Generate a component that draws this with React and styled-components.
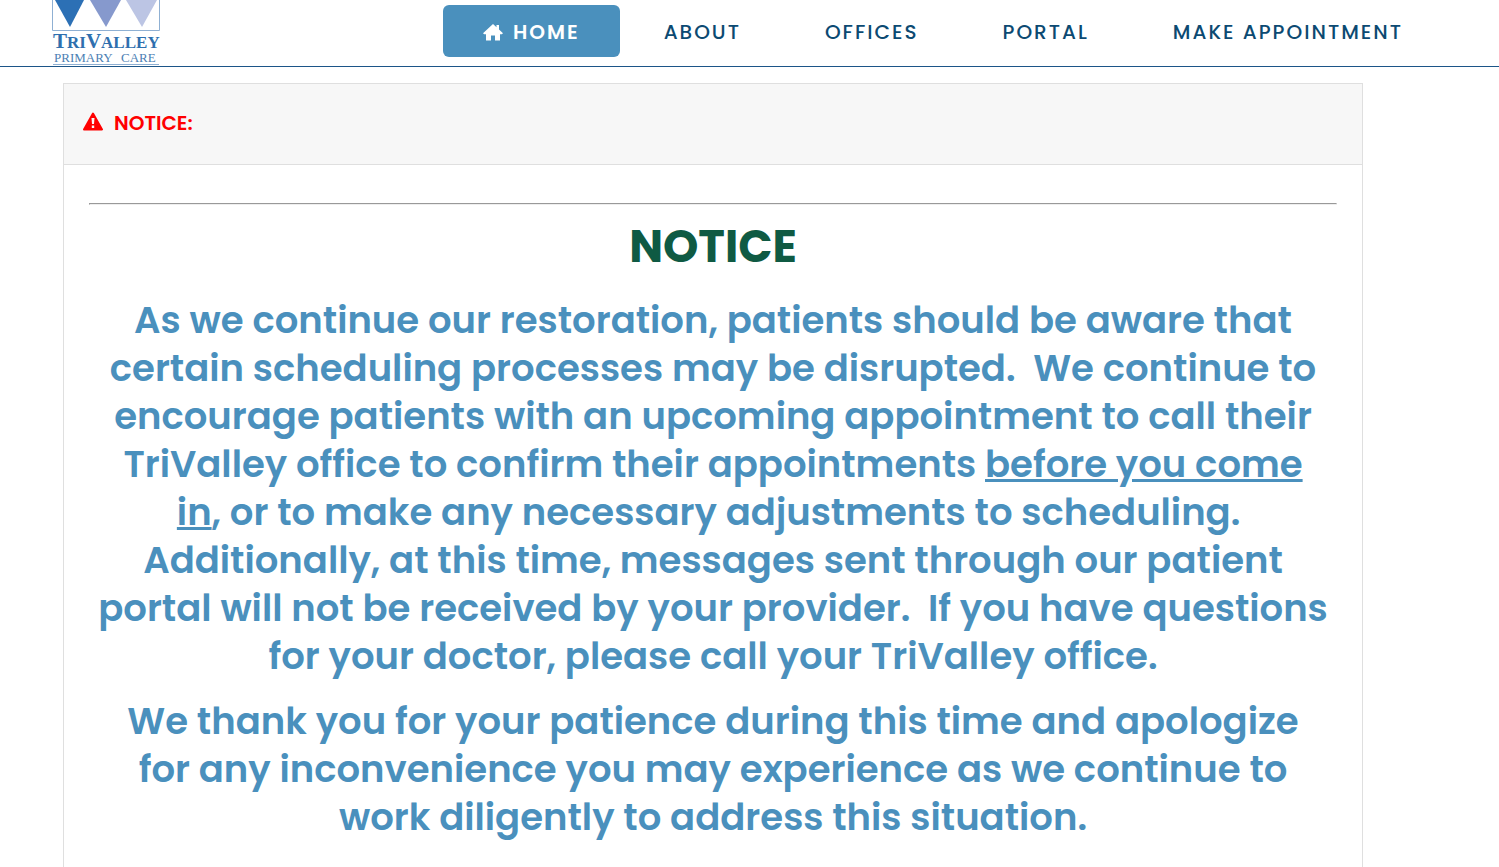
import React from 'react';
import styled, { createGlobalStyle } from 'styled-components';

const GlobalStyle = createGlobalStyle`
  * {
    box-sizing: border-box;
  }
  body {
    margin: 0;
    background: #fff;
    font-family: Poppins, Inter, "Open Sans", sans-serif;
  }
`;

const Header = styled.header`
  display: flex;
  justify-content: space-between;
  align-items: flex-start;
  height: 67px;
  padding: 0 56px 0 51px;
  border-bottom: 1px solid #1c5588;
`;

const LogoLink = styled.a`
  display: block;
  svg {
    display: block;
  }
`;

const Nav = styled.nav`
  display: flex;
  gap: 4px;
  padding-top: 5px;
`;

const NavLink = styled.a`
  display: flex;
  align-items: center;
  gap: 10px;
  height: 52px;
  padding: 2px 40px 0;
  border-radius: 6px;
  font-size: 20px;
  line-height: 30px;
  letter-spacing: 2px;
  text-decoration: none;
  white-space: nowrap;
  font-weight: ${props => (props.$active ? 600 : 500)};
  color: ${props => (props.$active ? '#fff' : '#0c4a72')};
  background: ${props => (props.$active ? '#4a90bd' : 'transparent')};
`;

const Card = styled.section`
  margin: 16px 136px 0 63px;
  border: 1px solid #dfdfdf;
`;

const CardHeader = styled.div`
  display: flex;
  align-items: center;
  gap: 11px;
  height: 81px;
  padding: 0 19px 4px;
  border-bottom: 1px solid #dfdfdf;
  background: #f7f7f7;
  color: #f00;
`;

const CardTitle = styled.h2`
  margin: 0;
  padding-top: 2px;
  font-size: 20px;
  line-height: 28px;
  font-weight: 600;
`;

const CardBody = styled.div`
  padding: 38px 25px 24px;
`;

const Rule = styled.hr`
  margin: 0;
  border: 1px solid;
  border-color: #999 #eee #eee #999;
`;

const Heading = styled.h1`
  margin: 15px 0 22px;
  font-size: 45px;
  line-height: 54px;
  font-weight: 700;
  text-align: center;
  color: #0f5a43;
`;

const Message = styled.p`
  margin: 0 0 17px;
  font-size: 37px;
  line-height: 48px;
  font-weight: 600;
  text-align: center;
  color: #4a90bd;
`;

const links = ['About', 'Offices', 'Portal', 'Make Appointment'];

const Logo = () => (
  <svg width="110" height="66" viewBox="0 0 110 66" role="img" aria-label="TriValley Primary Care">
    <path d="M1.500 0V30.500H108.500V0" fill="none" stroke="#8fb0d3" />
    <path d="M4 0H33L19 27Z" fill="#2c70b5" />
    <path d="M39 0H70L55 27Z" fill="#8699cd" />
    <path d="M75 0H106L91 27Z" fill="#bcc5e4" />
    <g fill="#2f6fae" fontFamily="Liberation Serif, serif">
      <text x="2" y="48" fontSize="21" fontWeight="700">
        T<tspan fontSize="17">RI</tspan>V<tspan fontSize="17">ALLEY</tspan>
      </text>
      <text x="3" y="62" fontSize="13" fill="#4c80b4">PRIMARY</text>
      <text x="70" y="62" fontSize="13" fill="#4c80b4">CARE</text>
    </g>
    <path d="M2 64.500H108" stroke="#8fb0d3" />
  </svg>
);

const HomeIcon = () => (
  <svg width="20" height="18" viewBox="0 0 20 18" fill="#fff" aria-hidden="true">
    <path d="M10 1L13.500 4.200V2H16V6.500L20 10.200L18.800 11.200H17V17.500H12V12.500H8V17.500H3V11.200H1.200L0 10.200Z" />
  </svg>
);

const WarningIcon = () => (
  <svg width="20" height="20" viewBox="0 0 20 20" aria-hidden="true">
    <path d="M10 1.500L19 17.500H1Z" fill="#f00" stroke="#f00" strokeWidth="2" strokeLinejoin="round" />
    <path d="M8.500 6H11.500L11 12H9Z" fill="#f7f7f7" />
    <path d="M8.800 13.500H11.200V16H8.800Z" fill="#f7f7f7" />
  </svg>
);

export default function App() {
  return (
    <>
      <GlobalStyle />
      <Header>
        <LogoLink href="#home">
          <Logo />
        </LogoLink>
        <Nav>
          <NavLink href="#home" $active>
            <HomeIcon />
            HOME
          </NavLink>
          {links.map(link => (
            <NavLink key={link} href="#">
              {link.toUpperCase()}
            </NavLink>
          ))}
        </Nav>
      </Header>
      <main>
        <Card>
          <CardHeader>
            <WarningIcon />
            <CardTitle>NOTICE:</CardTitle>
          </CardHeader>
          <CardBody>
            <Rule />
            <Heading>NOTICE</Heading>
            <Message>
              As we continue our restoration, patients should be aware that<br />
              certain scheduling processes may be disrupted.&nbsp; We continue to<br />
              encourage patients with an upcoming appointment to call their<br />
              TriValley office to confirm their appointments <u>before you come<br />
              in</u>, or to make any necessary adjustments to scheduling.&nbsp;<br />
              Additionally, at this time, messages sent through our patient<br />
              portal will not be received by your provider.&nbsp; If you have questions<br />
              for your doctor, please call your TriValley office.
            </Message>
            <Message>
              We thank you for your patience during this time and apologize<br />
              for any inconvenience you may experience as we continue to<br />
              work diligently to address this situation.
            </Message>
          </CardBody>
        </Card>
      </main>
    </>
  );
}
